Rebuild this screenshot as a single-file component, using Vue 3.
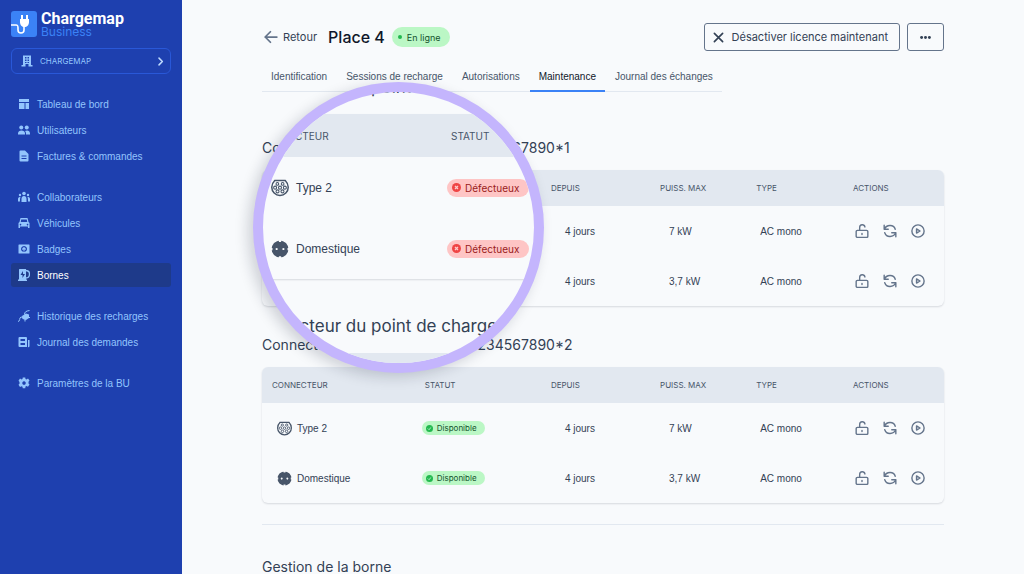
<script setup>
const navGroups = [
  [
    { label: 'Tableau de bord', icon: 'dashboard' },
    { label: 'Utilisateurs', icon: 'users' },
    { label: 'Factures & commandes', icon: 'file' },
  ],
  [
    { label: 'Collaborateurs', icon: 'team' },
    { label: 'Véhicules', icon: 'car' },
    { label: 'Badges', icon: 'badge' },
    { label: 'Bornes', icon: 'station', active: true },
  ],
  [
    { label: 'Historique des recharges', icon: 'plug' },
    { label: 'Journal des demandes', icon: 'journal' },
  ],
  [{ label: 'Paramètres de la BU', icon: 'gear' }],
]

const tabs = [
  { label: 'Identification' },
  { label: 'Sessions de recharge' },
  { label: 'Autorisations' },
  { label: 'Maintenance', active: true },
  { label: 'Journal des échanges' },
]

const columns = ['Connecteur', 'Statut', 'Depuis', 'Puiss. max', 'Type', 'Actions']

const actions = [
  { icon: 'unlock', label: 'Déverrouiller' },
  { icon: 'refresh', label: 'Redémarrer' },
  { icon: 'play', label: 'Démarrer' },
]

const connectors = (ok) => [
  { name: 'Type 2', icon: 'type2', ok, since: '4 jours', power: '7 kW', type: 'AC mono' },
  { name: 'Domestique', icon: 'domestic', ok, since: '4 jours', power: '3,7 kW', type: 'AC mono' },
]

const points = [
  { id: '1234567890*1', rows: connectors(false) },
  { id: '1234567890*2', rows: connectors(true) },
]
</script>

<template>
  <div class="shell">
    <svg class="sprite" aria-hidden="true">
      <symbol id="dashboard" viewBox="0 0 24 24"><path fill="currentColor" d="M2 2h20v6H2zM2 10h11v12H2zM15 10h7v12h-7z" /></symbol>
      <symbol id="users" viewBox="0 0 24 24">
        <g fill="currentColor"><circle cx="6.500" cy="7" r="4" /><circle cx="17.500" cy="7" r="4" /><path d="M0 21v-2c0-4 3-6 7-6s7 2 7 6v2zM16 21v-2c0-2-1-4-2-5 5-3 10 0 10 5v2z" /></g>
      </symbol>
      <symbol id="file" viewBox="0 0 24 24"><path fill="currentColor" fill-rule="evenodd" d="M5 1h9l7 7v13a2 2 0 0 1-2 2H5a2 2 0 0 1-2-2V3a2 2 0 0 1 2-2zM7 11v2h10v-2zM7 16v2h10v-2z" /></symbol>
      <symbol id="team" viewBox="0 0 24 24">
        <g fill="currentColor"><circle cx="12" cy="5" r="3.600" /><circle cx="4" cy="8" r="2.400" /><circle cx="20" cy="8" r="2.400" /><path d="M7 22v-6c0-4 2-6 5-6s5 2 5 6v6zM0 21v-5c0-3 2-4 5-4-1 3-1 5-1 9zM24 21v-5c0-3-2-4-5-4 1 3 1 5 1 9z" /></g>
      </symbol>
      <symbol id="car" viewBox="0 0 24 24"><path fill="currentColor" fill-rule="evenodd" d="M5 2h14l2 8 2 2v10h-3v-3H4v3H1V12l2-2zM6.500 5l-1 5h13l-1-5zM5 13.500a1.500 1.500 0 1 0 .1 0zM19 13.500a1.500 1.500 0 1 0 .1 0z" /></symbol>
      <symbol id="badge" viewBox="0 0 24 24">
        <path fill="currentColor" fill-rule="evenodd" d="M2 3h20a1 1 0 0 1 1 1v16a1 1 0 0 1-1 1H2a1 1 0 0 1-1-1V4a1 1 0 0 1 1-1zM12 6a6 6 0 1 0 .1 0zM12 8.500a3.500 3.500 0 0 1 3 5.500l-2-1v4h-2v-4l-2 1a3.500 3.500 0 0 1 3-5.500z" />
      </symbol>
      <symbol id="station" viewBox="0 0 24 24">
        <path fill="currentColor" fill-rule="evenodd" d="M3 0h13v21h2v3H0v-3h2V1zM10 4l-5 8h4v6l5-8h-4z" /><path fill="none" stroke="currentColor" stroke-width="2.600" d="M15 3c5 0 8 3 8 7 0 5-3 8-7 8" />
      </symbol>
      <symbol id="plug" viewBox="0 0 24 24">
        <path fill="currentColor" d="M8 12l8-5 6 2v7l-6 4-7-2z" /><path fill="none" stroke="currentColor" stroke-width="2" d="M0 23c5 0 2-8 6-9l5 1M13 9c0-5 3-7 10-8M18 15h6M14 18v5" />
      </symbol>
      <symbol id="journal" viewBox="0 0 24 24">
        <path fill="currentColor" fill-rule="evenodd" d="M3 2h13a2 2 0 0 1 2 2v18H3a2 2 0 0 1-2-2V4a2 2 0 0 1 2-2zM5 6v4h9V6zM5 14v4h9v-4zM20 8h3v12a2 2 0 0 1-3 2z" />
      </symbol>
      <symbol id="gear" viewBox="0 0 24 24">
        <path fill="currentColor" fill-rule="evenodd" d="M9.500 1h5l.5 3 2 1 3-2 3 4-2 2.500v3.500l2 2-3 4.500-3-1.500-2 1-.5 3.500h-5L9 19.500l-2-1L4 20l-3-4.500 2-2V10L1 7.500 4 3l3 2 2-1zM12 8.500a3.500 3.500 0 1 0 .1 0z" />
      </symbol>
      <symbol id="building" viewBox="0 0 24 24">
        <path fill="currentColor" fill-rule="evenodd" d="M4 1h16v19h3v3h-8v-5H9v5H1v-3h3zM8 4v3h3V4zM13 4v3h3V4zM8 9v3h3V9zM13 9v3h3V9zM8 14v2h3v-2zM13 14v2h3v-2z" />
      </symbol>
      <symbol id="chevron" viewBox="0 0 24 24"><path fill="none" stroke="currentColor" stroke-width="4" stroke-linecap="round" stroke-linejoin="round" d="M8 3l9 9-9 9" /></symbol>
      <symbol id="arrow" viewBox="0 0 24 24"><path fill="none" stroke="currentColor" stroke-width="3" stroke-linecap="round" stroke-linejoin="round" d="M22 12H2M11 3l-9 9 9 9" /></symbol>
      <symbol id="close" viewBox="0 0 24 24"><path fill="none" stroke="currentColor" stroke-width="3.600" stroke-linecap="round" d="M3 3l18 18M21 3L3 21" /></symbol>
      <symbol id="dots" viewBox="0 0 24 24"><g fill="currentColor"><circle cx="3.500" cy="12" r="3.200" /><circle cx="12" cy="12" r="3.200" /><circle cx="20.500" cy="12" r="3.200" /></g></symbol>
      <symbol id="type2" viewBox="0 0 24 24">
        <g fill="none" stroke="currentColor"><path stroke-width="2" d="M5 2h14c3 3 4 6 4 9a11 11 0 0 1-22 0c0-3 1-6 4-9z" />
          <g stroke-width="1.400"><circle cx="8.500" cy="6.500" r="1.800" /><circle cx="15.500" cy="6.500" r="1.800" /><circle cx="5.500" cy="11.500" r="2" /><circle cx="12" cy="11.500" r="2" /><circle cx="18.500" cy="11.500" r="2" /><circle cx="8.700" cy="16.500" r="2" /><circle cx="15.300" cy="16.500" r="2" /></g></g>
      </symbol>
      <symbol id="domestic" viewBox="0 0 24 24">
        <path fill="currentColor" fill-rule="evenodd" d="M8 1.500l2.500-.5v1.500h3V1l2.500.5 4 2.500L22.500 8l.5 2.500h-1v3h1l-.5 2.500-2.500 4-4 2.500-2.500.5v-1.500h-3V23L8 22.500 4 20l-2.500-4-.5-2.500h1v-3H1L1.500 8 4 4zM7.500 10.500a1.500 1.500 0 1 0 .1 0zM16.500 10.500a1.500 1.500 0 1 0 .1 0z" />
      </symbol>
      <symbol id="unlock" viewBox="0 0 24 24">
        <g fill="none" stroke="currentColor" stroke-width="2.400" stroke-linecap="round"><rect x="2" y="11" width="20" height="12" rx="2" /><path d="M8 11V6c0-6 8-6 9-1M12 16v2" /></g>
      </symbol>
      <symbol id="refresh" viewBox="0 0 24 24">
        <g fill="none" stroke="currentColor" stroke-width="2.400" stroke-linecap="round" stroke-linejoin="round"><path d="M2 2v7h7M2 9C6 1 18 0 21 9M22 22v-7h-7M22 15c-4 8-16 9-19 0" /></g>
      </symbol>
      <symbol id="play" viewBox="0 0 24 24">
        <g fill="none" stroke="currentColor" stroke-width="2.400" stroke-linejoin="round"><circle cx="12" cy="12" r="10.500" /><path d="M9.500 8.500v7l6-3.500z" /></g>
      </symbol>
      <symbol id="ok" viewBox="0 0 24 24"><circle cx="12" cy="12" r="12" fill="#22b84e" /><path fill="none" stroke="#bbf7d0" stroke-width="3" d="M6 12l4 4 8-8" /></symbol>
      <symbol id="ko" viewBox="0 0 24 24"><circle cx="12" cy="12" r="12" fill="#ef4444" /><path fill="none" stroke="#fecaca" stroke-width="3.500" d="M8 8l8 8M16 8l-8 8" /></symbol>
    </svg>

    <aside class="sidebar">
      <div class="brand">
        <svg class="brand-mark" viewBox="0 0 26 26" aria-hidden="true">
          <rect width="26" height="26" rx="3" fill="#3b82f6" />
          <path fill="none" stroke="#fff" stroke-width="1.600" d="M0 14h5c2 0 2 1 2 3v2c0 4 6 4 6 0v-4" />
          <path fill="#fff" d="M9 8h9v3c0 3-2 5-4.500 5S9 14 9 11zM10 4h2v5h-2zM15 4h2v5h-2z" />
        </svg>
        <div class="brand-text">
          <span class="brand-name">Chargemap</span>
          <span class="brand-sub">Business</span>
        </div>
      </div>

      <button class="account" type="button">
        <svg class="icon"><use href="#building" /></svg>
        <span>CHARGEMAP</span>
        <svg class="chevron"><use href="#chevron" /></svg>
      </button>

      <nav class="nav">
        <ul v-for="(group, g) in navGroups" :key="g">
          <li v-for="item in group" :key="item.label">
            <a href="#" :class="{ active: item.active }">
              <svg class="icon"><use :href="'#' + item.icon" /></svg>
              {{ item.label }}
            </a>
          </li>
        </ul>
      </nav>
    </aside>

    <main class="main">
      <header class="head">
        <a class="back" href="#"><svg><use href="#arrow" /></svg>Retour</a>
        <h1>Place 4</h1>
        <span class="online">En ligne</span>
        <div class="head-actions">
          <button class="btn" type="button"><svg><use href="#close" /></svg>Désactiver licence maintenant</button>
          <button class="btn more" type="button" aria-label="Plus d'options"><svg><use href="#dots" /></svg></button>
        </div>
      </header>

      <nav class="tabs">
        <a v-for="tab in tabs" :key="tab.label" href="#" :class="{ active: tab.active }">{{ tab.label }}</a>
      </nav>

      <div class="points">
        <section v-for="point in points" :key="point.id" class="point">
          <h2>Connecteur du point de charge {{ point.id }}</h2>
          <div class="card">
            <table>
              <thead>
                <tr><th v-for="c in columns" :key="c" scope="col">{{ c }}</th></tr>
              </thead>
              <tbody>
                <tr v-for="row in point.rows" :key="row.name">
                  <td><span class="name"><svg><use :href="'#' + row.icon" /></svg>{{ row.name }}</span></td>
                  <td>
                    <span class="pill" :class="{ ko: !row.ok }">
                      <svg><use :href="row.ok ? '#ok' : '#ko'" /></svg>{{ row.ok ? 'Disponible' : 'Défectueux' }}
                    </span>
                  </td>
                  <td>{{ row.since }}</td>
                  <td>{{ row.power }}</td>
                  <td>{{ row.type }}</td>
                  <td>
                    <div class="row-actions">
                      <button v-for="a in actions" :key="a.icon" type="button" :aria-label="a.label">
                        <svg><use :href="'#' + a.icon" /></svg>
                      </button>
                    </div>
                  </td>
                </tr>
              </tbody>
            </table>
          </div>
        </section>

        <div class="lens" aria-hidden="true">
          <div class="lens-content">
            <h2>Connecteur du point de charge</h2>
            <div class="card">
              <table>
                <thead>
                  <tr><th>Connecteur</th><th>Statut</th></tr>
                </thead>
                <tbody>
                  <tr v-for="row in points[0].rows" :key="row.name">
                    <td><span class="name"><svg><use :href="'#' + row.icon" /></svg>{{ row.name }}</span></td>
                    <td><span class="pill ko"><svg><use href="#ko" /></svg>Défectueux</span></td>
                  </tr>
                </tbody>
              </table>
            </div>
            <h2 class="next">Connecteur du point de charge</h2>
            <div class="band"></div>
          </div>
        </div>
      </div>

      <hr />
      <h2>Gestion de la borne</h2>
    </main>
  </div>
</template>

<style>
body {
  background: #f8fafc;
}
</style>

<style scoped>
.shell {
  display: flex;
  height: 100vh;
  overflow: hidden;
  font-family: Inter, "Liberation Sans", sans-serif;
  color: #334155;
  background: #f8fafc;
}
.shell * {
  box-sizing: border-box;
}
.sprite {
  position: absolute;
  width: 0;
  height: 0;
}
a {
  color: inherit;
  text-decoration: none;
}
button {
  font: inherit;
  color: inherit;
  background: none;
  border: 0;
  padding: 0;
  cursor: pointer;
}
svg {
  flex: none;
  display: block;
}
.nav,
.tabs,
td {
  font-family: "Liberation Sans", Arial, sans-serif;
}

.sidebar {
  flex: none;
  width: 182px;
  padding: 11px;
  background: #1e40af;
  color: #93c5fd;
  font-size: 10px;
}
.brand {
  display: flex;
  gap: 4px;
  height: 26px;
}
.brand-mark {
  width: 26px;
  height: 26px;
}
.brand-text {
  display: flex;
  flex-direction: column;
}
.brand-name {
  font: 700 16px/15px Roboto, sans-serif;
  color: #fff;
}
.brand-sub {
  font-size: 12px;
  line-height: 12px;
  color: #3b82f6;
}
.account {
  display: flex;
  align-items: center;
  width: 160px;
  height: 26px;
  margin-top: 11px;
  padding: 0 5px 0 9px;
  border: 1px solid #2958d8;
  border-radius: 6px;
  font-size: 8px;
}
.account span {
  flex: 1;
  margin-left: 7px;
  text-align: left;
}
.icon {
  width: 12px;
  height: 12px;
}
.chevron {
  width: 9px;
  height: 9px;
  color: #bfdbfe;
}
.nav {
  display: flex;
  flex-direction: column;
  gap: 17px;
  margin-top: 18px;
}
.nav ul {
  display: flex;
  flex-direction: column;
  gap: 2px;
  margin: 0;
  padding: 0;
  list-style: none;
}
.nav a {
  display: flex;
  align-items: center;
  gap: 7px;
  width: 160px;
  height: 24px;
  padding-left: 7px;
  border-radius: 3px;
  white-space: nowrap;
}
.nav a.active {
  background: #1e3a8a;
  color: #fff;
}
.nav a.active .icon {
  color: #93c5fd;
}

.main {
  flex: 1;
  min-width: 0;
  padding: 23px 80px 0;
}
.head {
  display: flex;
  align-items: center;
  height: 28px;
}
.back {
  display: flex;
  align-items: center;
  gap: 5px;
  padding-left: 2px;
  font-size: 11px;
}
.back svg {
  width: 14px;
  height: 14px;
  color: #64748b;
}
h1 {
  margin: 0 7px 0 11px;
  font-size: 16px;
  font-weight: 500;
  color: #0f172a;
}
.online {
  display: flex;
  align-items: center;
  gap: 5px;
  height: 20px;
  padding: 0 9px 0 6px;
  border-radius: 10px;
  background: #bbf7c5;
  color: #14532d;
  font-size: 9px;
}
.online::before {
  content: "";
  width: 4px;
  height: 4px;
  border-radius: 50%;
  background: #22b84e;
}
.head-actions {
  display: flex;
  gap: 7px;
  margin-left: auto;
}
.btn {
  display: flex;
  align-items: center;
  gap: 8px;
  height: 28px;
  padding: 0 11px 0 8px;
  border: 1px solid #64748b;
  border-radius: 3px;
  font-size: 11px;
}
.btn svg {
  width: 11px;
  height: 11px;
}
.btn.more {
  padding: 0 12px;
}
.tabs {
  display: flex;
  gap: 1px;
  width: max-content;
  margin-top: 11px;
  border-bottom: 1px solid #e2e8f0;
  font-size: 10px;
  line-height: 30px;
  color: #475569;
}
.tabs a {
  height: 30px;
  padding: 0 9px;
  margin-bottom: -1px;
}
.tabs a.active {
  color: #0f172a;
  border-bottom: 2px solid #3b82f6;
}

h2 {
  margin: 0;
  font-size: 14px;
  line-height: 20px;
  font-weight: 400;
  white-space: nowrap;
}
.points {
  position: relative;
  padding-top: 46px;
}
.point + .point {
  margin-top: 29px;
}
.card {
  margin-top: 12px;
  border-radius: 6px;
  overflow: hidden;
  box-shadow: 0 1px 2px rgba(15, 23, 42, 0.14);
}
table {
  width: 100%;
  border-collapse: collapse;
  table-layout: fixed;
}
th {
  height: 36px;
  padding: 0 0 0 10px;
  background: #e2e8f0;
  color: #475569;
  font-size: 8px;
  font-weight: 400;
  text-align: left;
  text-transform: uppercase;
}
th:nth-child(1) { width: 22.4%; }
th:nth-child(2) { width: 18.5%; }
th:nth-child(3) { width: 16%; }
th:nth-child(4) { width: 14.1%; }
th:nth-child(5) { width: 14.2%; }
td {
  height: 50px;
  padding: 0 0 0 15px;
  font-size: 10px;
}
td:nth-child(2) { padding-left: 7px; }
td:nth-child(3) { padding-left: 24px; }
td:nth-child(4) { padding-left: 19px; }
td:nth-child(5) { padding-left: 14px; }
td:nth-child(6) { padding-left: 12px; }
.name {
  display: flex;
  align-items: center;
  gap: 5px;
}
.name svg {
  width: 15px;
  height: 15px;
  color: #475569;
}
.pill {
  display: flex;
  align-items: center;
  gap: 4px;
  width: max-content;
  height: 14px;
  padding: 0 8px 0 4px;
  border-radius: 9px;
  background: #bbf7c5;
  color: #14532d;
  font-family: Inter, "Liberation Sans", sans-serif;
  font-size: 8px;
}
.pill svg {
  width: 7px;
  height: 7px;
}
.pill.ko {
  background: #fec5c5;
  color: #991b1b;
}
.row-actions {
  display: flex;
  gap: 14px;
}
.row-actions svg {
  width: 14px;
  height: 14px;
  color: #64748b;
}

.lens {
  position: absolute;
  top: -10px;
  left: -9px;
  width: 291px;
  height: 291px;
  border: 10px solid #c4b5fd;
  border-radius: 50%;
  overflow: hidden;
  background: #f8fafc;
  box-shadow: -5px 4px 14px rgba(15, 23, 42, 0.18);
}
.lens-content {
  width: 400px;
  margin: -17px 0 0 -16px;
}
.lens h2 {
  font-size: 17px;
  line-height: 24px;
}
.lens .next {
  margin-top: 35px;
}
.lens .card,
.band {
  margin-top: 15px;
}
.lens th {
  height: 43px;
  padding-left: 12px;
  font-size: 10px;
}
.lens th:nth-child(1) { width: 192px; }
.lens th:nth-child(2) { width: auto; }
.lens td {
  height: 61px;
  padding-left: 24px;
  font-size: 12px;
}
.lens td:nth-child(2) { padding-left: 8px; }
.lens .name {
  gap: 7px;
}
.lens .name svg {
  width: 18px;
  height: 18px;
}
.lens .pill {
  height: 18px;
  padding: 0 10px 0 5px;
  font-size: 10px;
}
.lens .pill svg {
  width: 9px;
  height: 9px;
}
.band {
  height: 43px;
  background: #e2e8f0;
}
hr {
  margin: 21px 0 32px;
  border: 0;
  border-top: 1px solid #e2e8f0;
}
</style>
